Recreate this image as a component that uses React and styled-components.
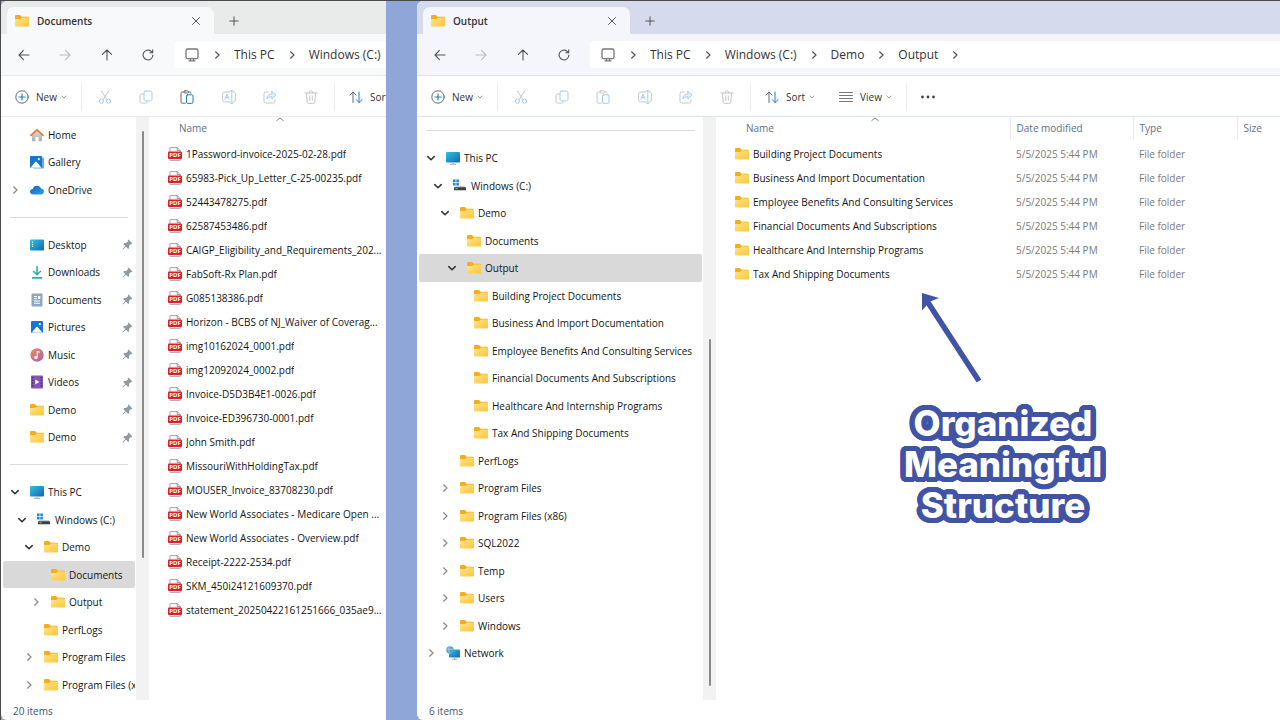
import React from 'react';
import styled, { createGlobalStyle, css } from 'styled-components';

const GlobalStyle = createGlobalStyle`
  *, *::before, *::after { box-sizing: border-box; }
  body {
    margin: 0;
    background: #8fa7d8;
    color: #141414;
    font: 10px/16px "Open Sans", "Noto Sans", sans-serif;
  }
  ul { margin: 0; padding: 0; list-style: none; }
  button {
    display: flex;
    align-items: center;
    margin: 0;
    padding: 0;
    border: 0;
    background: none;
    color: inherit;
    font: inherit;
    white-space: nowrap;
  }
  svg { display: block; flex: none; }
`;

/* ---------- layout ---------- */

const Desktop = styled.main`
  display: grid;
  grid-template-columns: minmax(0, 385fr) 31px minmax(0, 863fr);
  min-height: 100vh;
  border-top: 1px solid #4c494b;
  border-left: 1px solid #4c494b;
`;

const Gutter = styled.div`
  background: #8fa7d8;
`;

const Window = styled.section`
  display: flex;
  flex-direction: column;
  min-width: 0;
  overflow: hidden;
  background: #fff;
  border-radius: 6px 0 0 6px;
  --chrome: ${(p) => (p.$active ? '#d5daec' : '#e9eaea')};
  --bar: ${(p) => (p.$active ? '#f5f6fb' : '#f8f9fb')};
  --line: ${(p) => (p.$active ? '#dbe1ee' : '#e8e9eb')};
`;

const TabStrip = styled.header`
  display: flex;
  align-items: flex-end;
  height: 33px;
  padding-left: 6px;
  background: var(--chrome);
`;

const Tab = styled.div`
  display: flex;
  align-items: center;
  gap: 8px;
  width: 207px;
  height: 27px;
  padding: 0 13px 0 8px;
  background: var(--bar);
  border-radius: 7px 7px 0 0;
`;

const TabTitle = styled.h1`
  flex: 1;
  margin: 0;
  color: #333;
  font-size: 10px;
  font-weight: 600;
`;

const NewTab = styled.button`
  justify-content: center;
  width: 40px;
  height: 27px;
  color: #555;
`;

const AddressBar = styled.nav`
  display: flex;
  gap: 5px;
  height: 42px;
  padding: 7px 0 7px 2px;
  background: var(--bar);
  border-bottom: 1px solid var(--line);
`;

const NavButtons = styled.div`
  display: grid;
  grid-template-columns: repeat(4, 1fr);
  flex: none;
  width: 166px;
`;

const IconButton = styled.button`
  justify-content: center;
  color: ${(p) => (p.$dim ? '#bdbdbd' : '#555')};
`;

const Path = styled.div`
  display: flex;
  align-items: center;
  flex: 1;
  min-width: 0;
  overflow: hidden;
  padding-left: 10px;
  background: #fff;
  border-radius: 4px 0 0 4px;
  color: #333;
  font-size: 12px;
`;

const Crumb = styled.a`
  flex: none;
  color: inherit;
  text-decoration: none;
  white-space: nowrap;
`;

const CrumbArrow = styled.span`
  display: flex;
  justify-content: center;
  flex: none;
  width: 34px;
  color: #555;
`;

const Toolbar = styled.div`
  display: flex;
  align-items: center;
  height: 41px;
  padding: 2px 0 0 2px;
  border-bottom: 1px solid var(--line);
  color: #333;
`;

const ToolButton = styled.button`
  flex: none;
  height: 28px;
  padding: 0 12px;
`;

const ToolLabel = styled.span`
  margin: 0 4px 0 7px;
`;

const Divider = styled.span`
  flex: none;
  width: 1px;
  height: 27px;
  margin: 0 2px;
  background: #ededed;
`;

const FileActions = styled.div`
  display: grid;
  grid-template-columns: repeat(6, 1fr);
  flex: none;
  width: 248px;
  height: 28px;
`;

const Body = styled.div`
  display: flex;
  flex: 1;
  min-height: 0;
`;

const Tree = styled.ul`
  flex: none;
  width: ${(p) => (p.$wide ? '286px' : '135px')};
  padding: ${(p) => (p.$wide ? '0 1px 0 2px' : '4px 1px 0 2px')};
`;

const TreeItem = styled.li`
  display: flex;
  flex-direction: column;
  justify-content: center;
  height: 27px;
  &:nth-child(even) { height: 28px; }
`;

const TreeRule = styled.hr`
  width: calc(100% - 14px);
  margin: 0 7px;
  border: 0;
  border-top: 1px solid #dcdcdc;
`;

const TreeButton = styled.button`
  width: 100%;
  height: 100%;
  overflow: hidden;
  padding: 0 2px 0 ${(p) => 5 + p.$depth * 7}px;
  border-radius: 2px;
  ${(p) => p.$selected && css`background: #d9d9d9;`}
`;

const Twisty = styled.span`
  display: flex;
  justify-content: center;
  flex: none;
  width: 14px;
  margin-right: 8px;
  color: ${(p) => (p.$open ? '#333' : '#8a8a8a')};
`;

const TreeLabel = styled.span`
  flex: 1;
  margin-left: 4px;
  text-align: left;
`;

const ScrollTrack = styled.div`
  display: flex;
  justify-content: center;
  flex: none;
  width: 13px;
  padding: ${(p) => p.$before}px 0 ${(p) => p.$after}px;
  background: #f2f2f2;
`;

const ScrollThumb = styled.span`
  width: 2px;
  border-radius: 1px;
  background: #8a8a8a;
`;

const Files = styled.div`
  flex: 1;
  min-width: 0;
  overflow: hidden;
`;

const FileTable = styled.table`
  width: 100%;
  table-layout: fixed;
  border-collapse: collapse;
  white-space: nowrap;
`;

const HeadCell = styled.th`
  position: relative;
  width: ${(p) => p.$width || 'auto'};
  height: 23px;
  padding: 0 0 2px ${(p) => (p.$first ? '30px' : '6px')};
  border-left: ${(p) => (p.$first ? '0' : '1px solid #e6eaf2')};
  color: #5d6f88;
  font-weight: 400;
  text-align: left;
`;

const SortMark = styled.span`
  position: absolute;
  top: 0;
  left: calc(50% + 8px);
  color: #777;
`;

const HeadGap = styled.tr`
  height: 2px;
`;

const Cell = styled.td`
  height: 24px;
  padding: 0 0 0 6px;
  color: #7a7a7a;
`;

const NameCell = styled(Cell)`
  padding: 0 1px 0 19px;
  color: #141414;
`;

const FileRow = styled.div`
  display: flex;
  align-items: center;
  gap: 4px;
`;

const FileName = styled.span`
  min-width: 0;
  overflow: hidden;
  text-overflow: ellipsis;
`;

const Status = styled.footer`
  height: 20px;
  padding: 3px 0 0 12px;
  color: #3b5573;
`;

const Callout = styled.aside`
  display: flex;
  flex-direction: column;
  box-sizing: content-box;
  width: 204px;
  margin: 6px auto 0;
  padding-left: 10px;
`;

const CalloutArrow = styled.svg`
  margin-left: 17px;
`;

const outline = Array.from({ length: 32 }, (_, i) => {
  const angle = (i * Math.PI) / 16;
  return `${(5.4 * Math.cos(angle)).toFixed(2)}px ${(5.4 * Math.sin(angle)).toFixed(2)}px 0 #4053a4`;
}).join(', ');

const CalloutText = styled.p`
  margin: 19px 0 0;
  color: #fff;
  font: 800 35px/41px Inter, "Open Sans", sans-serif;
  text-align: center;
  text-shadow: ${outline}, 2px 2px 0 #4053a4, -2px 2px 0 #4053a4, 2px -2px 0 #4053a4, -2px -2px 0 #4053a4;
`;

/* ---------- line icons ---------- */

const Line = ({ size = 16, width = 1, children, ...rest }) => (
  <svg width={size} height={size} viewBox={`0 0 ${size} ${size}`} fill="none" stroke="currentColor"
    strokeWidth={width} strokeLinecap="round" strokeLinejoin="round" aria-hidden="true" {...rest}>
    {children}
  </svg>
);

const Close = () => <Line size={10}><path d="M1.5 1.5l7 7M8.5 1.5l-7 7" /></Line>;
const Plus = () => <Line size={10}><path d="M5 .8v8.4M.8 5h8.4" /></Line>;
const Back = () => <Line size={12} width={1.1}><path d="M11 6H1M5.4 1.4L1 6l4.4 4.6" /></Line>;
const Forward = () => <Line size={12} width={1.1}><path d="M1 6h10M6.6 1.4L11 6l-4.4 4.6" /></Line>;
const Up = () => <Line size={12} width={1.1}><path d="M6 11V1M1.4 5.4L6 1l4.6 4.4" /></Line>;
const Refresh = () => <Line size={12} width={1.1}><path d="M10.9 6a4.9 4.9 0 1 1-1.7-3.7l1.3 1.3M10.7.8v2.9H7.8" /></Line>;
const Monitor = () => (
  <Line size={16} width={1.3} stroke="#777">
    <rect x="2" y="2" width="12" height="9.6" rx="1.6" /><path d="M5 13.8h6M6.4 12v1.6M9.6 12v1.6" />
  </Line>
);
const ChevronRight = () => <Line size={8} width={1.2}><path d="M2.6.8L6 4 2.6 7.2" /></Line>;
const ChevronDown = () => <Line size={8} width={1.5}><path d="M.8 2.6L4 5.8l3.2-3.2" /></Line>;
const SmallDown = () => <Line size={6} width={0.9} stroke="#999"><path d="M1 2l2 2 2-2" /></Line>;
const SortUp = () => <Line size={8}><path d="M.8 3.6L4 .9l3.2 2.7" /></Line>;

const NewIcon = () => (
  <Line size={14}><circle cx="7" cy="7" r="6.2" stroke="#666" /><path d="M7 4v6M4 7h6" stroke="#1a80d0" strokeWidth="1.2" /></Line>
);
const Cut = () => (
  <Line size={14}>
    <path d="M3.2.8l5.9 9M10.8.8l-5.9 9" stroke="#c4c4c4" />
    <circle cx="3.4" cy="11.2" r="2.1" stroke="#9fcdf0" /><circle cx="10.6" cy="11.2" r="2.1" stroke="#9fcdf0" />
  </Line>
);
const Copy = () => (
  <Line size={14}>
    <path d="M4 4H2.6C1.6 4 1 4.6 1 5.5v5.6c0 1.2.8 2 2 2h3.6c.9 0 1.5-.5 1.6-1.3" stroke="#c4c4c4" />
    <rect x="5" y="1" width="8" height="10" rx="1.7" stroke="#9fcdf0" />
  </Line>
);
const Paste = ({ on }) => (
  <Line size={14}>
    <path d="M4 2H2.2C1.5 2 1 2.5 1 3.2V12c0 .7.5 1.200 1.200 1.200h3M8.500 2h1.300c.7 0 1.200.5 1.200 1.200" stroke={on ? '#666' : '#c8c8c8'} />
    <rect x="4" y=".8" width="4.5" height="2.2" rx="1" stroke={on ? '#666' : '#c8c8c8'} />
    <rect x="6.5" y="4.8" width="6.5" height="8.600" rx="1.2" stroke={on ? '#1a80d0' : '#9fcdf0'} />
  </Line>
);
const Rename = () => (
  <Line size={14}>
    <path d="M8.200 2H2.300C1.300 2 .7 2.600.7 3.500v6.800c0 1 .6 1.600 1.600 1.600h5.900M11.400 2c1.200 0 2 .6 2 1.600v6.700c0 1-.8 1.600-2 1.600" stroke="#c4c4c4" />
    <path d="M9.800.7v12.600M8.600.7H11M8.600 13.300H11M3 9.200l2-5 2 5M3.700 7.700h2.700" stroke="#9fcdf0" />
  </Line>
);
const Share = () => (
  <Line size={14}>
    <path d="M5 2H3C1.800 2 1 2.800 1 4v7c0 1.200.8 2 2 2h7c1.200 0 2-.8 2-2v-.8" stroke="#c4c4c4" />
    <path d="M8.800 1.400L13 5.200 8.800 9V6.800C6.500 6.700 5 7.500 3.800 9c.2-3.200 2-5 5-5.200z" stroke="#9fcdf0" fill="#e3f1fc" />
  </Line>
);
const Trash = () => (
  <Line size={14} stroke="#c4c4c4">
    <path d="M1 3h12M5 3c0-1.400.8-2.200 2-2.200S9 1.600 9 3M2.300 3l.9 9c.1.8.6 1.300 1.400 1.300h4.800c.8 0 1.300-.5 1.400-1.300l.9-9M5.700 5.800v4.700M8.300 5.800v4.700" />
  </Line>
);
const SortIcon = () => (
  <Line size={14}>
    <path d="M4 12.500V2M1 5l3-3 3 3" stroke="#666" /><path d="M10 2v10.500M7.300 9.700l2.700 2.800 3-2.800" stroke="#1a80d0" />
  </Line>
);
const ViewIcon = () => <Line size={14} stroke="#777"><path d="M.5 2.500h13M.5 5.500h13M.5 8.500h13M.5 11.500h13" /></Line>;
const More = () => (
  <svg width="14" height="4" viewBox="0 0 14 4" fill="#444" aria-hidden="true"><circle cx="1.500" cy="2" r="1.400" /><circle cx="7" cy="2" r="1.400" /><circle cx="12.500" cy="2" r="1.400" /></svg>
);

/* ---------- colour icons ---------- */

const Glyph = ({ children }) => <svg width="14" height="14" viewBox="0 0 14 14" aria-hidden="true">{children}</svg>;

const GradientDefs = styled.svg`
  position: absolute;
`;

const Gradients = () => (
  <GradientDefs width="0" height="0" aria-hidden="true">
    <defs>
      <linearGradient id="folder" x1="0" y1="0" x2="1" y2="1"><stop offset="0" stopColor="#ffe48f" /><stop offset="1" stopColor="#fcc637" /></linearGradient>
      <linearGradient id="screen" x1="0" y1="0" x2="1" y2="1"><stop offset="0" stopColor="#2cc5dc" /><stop offset="1" stopColor="#1763b8" /></linearGradient>
      <linearGradient id="cloud" x1="0" y1="0" x2="1" y2="1"><stop offset="0" stopColor="#0f5fb4" /><stop offset="1" stopColor="#2ba6ea" /></linearGradient>
      <linearGradient id="music" x1="0" y1="0" x2="1" y2="1"><stop offset="0" stopColor="#ee8a5d" /><stop offset="1" stopColor="#ae61a8" /></linearGradient>
      <linearGradient id="wall" x1="0" y1="0" x2="0" y2="1"><stop offset="0" stopColor="#e3e3e3" /><stop offset="1" stopColor="#aaa" /></linearGradient>
    </defs>
  </GradientDefs>
);

const Picture = () => (
  <g>
    <rect y="1" width="12" height="12" rx="1" fill="#1976ce" />
    <path d="M.5 12.700l4.600-5.400c.5-.6 1.200-.6 1.700 0l4.700 5.400z" fill="#fff" />
    <circle cx="8.800" cy="4.200" r="1.100" fill="#fff" />
  </g>
);

const glyphs = {
  folder: (
    <Glyph>
      <path d="M0 2.200C0 1.500.5 1 1.200 1h3.300c.5 0 .8.2 1.100.5l1 1.200h6.200c.7 0 1.200.5 1.200 1.200V6H0z" fill="#f5ae1b" />
      <path d="M0 5h4.700c.4 0 .8-.1 1.100-.4l.8-.7c.3-.3.600-.4 1-.4h5.400c.6 0 1 .4 1 1v7c0 .7-.5 1.100-1.200 1.100H1.200C.5 12.600 0 12.200 0 11.500z" fill="url(#folder)" />
    </Glyph>
  ),
  home: (
    <Glyph>
      <path d="M2 6.300L7 2l5 4.300v6.200c0 .5-.3.8-.8.800H8.700V9.500c0-.4-.2-.6-.6-.6H6c-.4 0-.6.2-.6.600v3.800H2.800c-.5 0-.8-.3-.8-.8z" fill="url(#wall)" />
      <path d="M1 7.300L7 1.800l6 5.500" fill="none" stroke="#e8792c" strokeWidth="1.800" strokeLinecap="round" strokeLinejoin="round" />
    </Glyph>
  ),
  gallery: <Glyph><rect x="3" y="2.500" width="11" height="11" rx="1" fill="#6fa9e0" /><Picture /></Glyph>,
  cloud: <Glyph><path d="M3.400 11.500C1.500 11.500 0 10.300 0 8.700 0 7.200 1.200 6.100 2.800 6 3.400 3.900 5 2.800 7 2.800c1.900 0 3.300 1 3.900 2.700 1.800.1 3.100 1.300 3.100 3s-1.400 3-3.200 3z" fill="url(#cloud)" /></Glyph>,
  desktop: <Glyph><rect y="1.500" width="14" height="11" rx="1" fill="url(#screen)" /><path d="M2 4h1.200M2 6.200h1.200M2 8.400h1.200" stroke="#fff" strokeWidth="1.100" /></Glyph>,
  download: <Glyph><path d="M7 1v8.500M3.200 6L7 9.700 10.800 6M2 12.900h10" fill="none" stroke="#2db39a" strokeWidth="1.600" /></Glyph>,
  document: (
    <Glyph>
      <rect x="1.500" y=".5" width="11" height="13" rx="1" fill="#8fa6c0" />
      <path d="M4 3.500h3M4 5.700h3M4 8h6M4 10.300h6" stroke="#fff" strokeWidth="1.100" /><rect x="8" y="3" width="2.300" height="3" fill="#fff" />
    </Glyph>
  ),
  picture: <Glyph><g transform="translate(1 0)"><Picture /></g></Glyph>,
  music: (
    <Glyph>
      <circle cx="7" cy="7" r="6.700" fill="url(#music)" />
      <path d="M7.300 9.300V3.200l2.500 1" fill="none" stroke="#fff" strokeWidth="1.100" /><circle cx="5.900" cy="9.400" r="1.600" fill="#fff" />
    </Glyph>
  ),
  video: (
    <Glyph>
      <rect x="1" y=".5" width="12" height="13" rx="1" fill="#8456b3" /><path d="M5.300 4.600v4.800L9.300 7z" fill="#fff" />
      <path d="M2.700 2v10.500M11.300 2v10.500" stroke="#47266f" strokeWidth="1.200" strokeDasharray="1.300 1.400" />
    </Glyph>
  ),
  pc: <Glyph><rect y="1" width="14" height="10.500" rx="1" fill="url(#screen)" /><path d="M7 11.500v1.500M4 13.300h6" stroke="#9aa9b5" strokeWidth="1" /></Glyph>,
  drive: (
    <Glyph>
      <path d="M0 .5h2.600v2.600H0zM3.300.5h2.600v2.600H3.300zM0 3.800h2.600v2.600H0zM3.300 3.800h2.600v2.600H3.300z" fill="#1f86d6" />
      <path d="M2.500 7h9l1.300 1.800H1.200z" fill="#c8c8c8" /><rect x="1" y="8.200" width="12" height="3" rx=".5" fill="#3c3f42" /><path d="M2.500 9.700h2" stroke="#5fe08a" />
    </Glyph>
  ),
  network: (
    <Glyph>
      <rect x="3" y="3.500" width="11" height="8" rx=".8" fill="url(#screen)" /><path d="M8.500 11.500V13M6 13.300h5" stroke="#9aa9b5" />
      <circle cx="4" cy="4" r="3.700" fill="#4fa3d0" /><path d="M.6 3.200h6.800M4 .3C2.200 2.400 2.200 5.600 4 7.700" fill="none" stroke="#a9d9ee" strokeWidth=".8" />
    </Glyph>
  ),
  pdf: (
    <Glyph>
      <path d="M2 .5h7.500l2.700 2.700v10.200H2z" fill="#f6f6f6" stroke="#a2a2a2" strokeWidth=".9" /><path d="M9.200.5v3h3" fill="#ddd" stroke="#8f8f8f" strokeWidth=".8" />
      <rect y="4.500" width="14" height="7.500" rx=".9" fill="#e01f2d" />
      <text x="7" y="10.400" textAnchor="middle" fill="#fff" fontFamily="Open Sans, sans-serif" fontWeight="700" fontSize="6">PDF</text>
    </Glyph>
  ),
};

const Pin = () => (
  <svg width="11" height="11" viewBox="0 0 11 11" fill="#8f9ba3" aria-hidden="true">
    <path d="M6.600.6l3.800 3.800-.8.800-.7-.1-1.900 1.900.1 2-.9.900-2.200-2.200L1 10.500l-.5-.5 2.800-3L1.200 4.900l.9-.9 2 .1L6 2.200l-.2-.8z" />
  </svg>
);

/* ---------- parts ---------- */

function TreeRow({ item }) {
  if (item === null) return <TreeItem><TreeRule /></TreeItem>;
  const { icon = 'folder', label, depth = 0, open, pin, selected } = item;
  return (
    <TreeItem>
      <TreeButton $depth={depth} $selected={selected}>
        <Twisty $open={open}>{open === true && <ChevronDown />}{open === false && <ChevronRight />}</Twisty>
        {glyphs[icon]}
        <TreeLabel>{label}</TreeLabel>
        {pin && <Pin />}
      </TreeButton>
    </TreeItem>
  );
}

function Explorer({ title, active, path, trailing, tree, thumb, columns, files, icon, status, children }) {
  return (
    <Window $active={active} aria-label={title}>
      <TabStrip>
        <Tab>{glyphs.folder}<TabTitle>{title}</TabTitle><IconButton aria-label="Close tab"><Close /></IconButton></Tab>
        <NewTab aria-label="New tab"><Plus /></NewTab>
      </TabStrip>
      <AddressBar aria-label="Location">
        <NavButtons>
          <IconButton aria-label="Back"><Back /></IconButton>
          <IconButton $dim aria-label="Forward"><Forward /></IconButton>
          <IconButton aria-label="Up"><Up /></IconButton>
          <IconButton aria-label="Refresh"><Refresh /></IconButton>
        </NavButtons>
        <Path>
          <Monitor />
          {path.map((name) => (
            <React.Fragment key={name}><CrumbArrow><ChevronRight /></CrumbArrow><Crumb href="#">{name}</Crumb></React.Fragment>
          ))}
          {trailing && <CrumbArrow><ChevronRight /></CrumbArrow>}
        </Path>
      </AddressBar>
      <Toolbar>
        <ToolButton><NewIcon /><ToolLabel>New</ToolLabel><SmallDown /></ToolButton>
        <Divider />
        <FileActions>
          <IconButton aria-label="Cut"><Cut /></IconButton>
          <IconButton aria-label="Copy"><Copy /></IconButton>
          <IconButton aria-label="Paste"><Paste on={!active} /></IconButton>
          <IconButton aria-label="Rename"><Rename /></IconButton>
          <IconButton aria-label="Share"><Share /></IconButton>
          <IconButton aria-label="Delete"><Trash /></IconButton>
        </FileActions>
        <Divider />
        <ToolButton><SortIcon /><ToolLabel>Sort</ToolLabel><SmallDown /></ToolButton>
        {active && (
          <>
            <ToolButton><ViewIcon /><ToolLabel>View</ToolLabel><SmallDown /></ToolButton>
            <Divider />
            <ToolButton aria-label="More"><More /></ToolButton>
          </>
        )}
      </Toolbar>
      <Body>
        <Tree $wide={active}>{tree.map((item, i) => <TreeRow key={i} item={item} />)}</Tree>
        <ScrollTrack $before={thumb[0]} $after={thumb[1]}><ScrollThumb /></ScrollTrack>
        <Files>
          <FileTable>
            <thead>
              <tr>
                <HeadCell $first>Name<SortMark><SortUp /></SortMark></HeadCell>
                {columns.map(([name, width]) => <HeadCell key={name} $width={width}>{name}</HeadCell>)}
              </tr>
            </thead>
            <tbody>
              <HeadGap />
              {files.map((row) => (
                <tr key={row[0]}>
                  <NameCell><FileRow>{glyphs[icon]}<FileName>{row[0]}</FileName></FileRow></NameCell>
                  {row.slice(1).map((value, i) => <Cell key={i}>{value}</Cell>)}
                </tr>
              ))}
            </tbody>
          </FileTable>
          {children}
        </Files>
      </Body>
      <Status>{status}</Status>
    </Window>
  );
}

/* ---------- data ---------- */

const documentsTree = [
  { icon: 'home', label: 'Home' },
  { icon: 'gallery', label: 'Gallery' },
  { icon: 'cloud', label: 'OneDrive', open: false },
  null,
  { icon: 'desktop', label: 'Desktop', pin: true },
  { icon: 'download', label: 'Downloads', pin: true },
  { icon: 'document', label: 'Documents', pin: true },
  { icon: 'picture', label: 'Pictures', pin: true },
  { icon: 'music', label: 'Music', pin: true },
  { icon: 'video', label: 'Videos', pin: true },
  { label: 'Demo', pin: true },
  { label: 'Demo', pin: true },
  null,
  { icon: 'pc', label: 'This PC', open: true },
  { icon: 'drive', label: 'Windows (C:)', depth: 1, open: true },
  { label: 'Demo', depth: 2, open: true },
  { label: 'Documents', depth: 3, selected: true },
  { label: 'Output', depth: 3, open: false },
  { label: 'PerfLogs', depth: 2 },
  { label: 'Program Files', depth: 2, open: false },
  { label: 'Program Files (x86)', depth: 2, open: false },
];

const folders = [
  'Building Project Documents',
  'Business And Import Documentation',
  'Employee Benefits And Consulting Services',
  'Financial Documents And Subscriptions',
  'Healthcare And Internship Programs',
  'Tax And Shipping Documents',
];

const outputTree = [
  null,
  { icon: 'pc', label: 'This PC', open: true },
  { icon: 'drive', label: 'Windows (C:)', depth: 1, open: true },
  { label: 'Demo', depth: 2, open: true },
  { label: 'Documents', depth: 3 },
  { label: 'Output', depth: 3, open: true, selected: true },
  ...folders.map((label) => ({ label, depth: 4 })),
  { label: 'PerfLogs', depth: 2 },
  ...['Program Files', 'Program Files (x86)', 'SQL2022', 'Temp', 'Users', 'Windows'].map((label) => ({ label, depth: 2, open: false })),
  { icon: 'network', label: 'Network', open: false },
];

const pdfs = [
  '1Password-invoice-2025-02-28.pdf',
  '65983-Pick_Up_Letter_C-25-00235.pdf',
  '52443478275.pdf',
  '62587453486.pdf',
  'CAIGP_Eligibility_and_Requirements_202...',
  'FabSoft-Rx Plan.pdf',
  'G085138386.pdf',
  'Horizon - BCBS of NJ_Waiver of Coverag...',
  'img10162024_0001.pdf',
  'img12092024_0002.pdf',
  'Invoice-D5D3B4E1-0026.pdf',
  'Invoice-ED396730-0001.pdf',
  'John Smith.pdf',
  'MissouriWithHoldingTax.pdf',
  'MOUSER_Invoice_83708230.pdf',
  'New World Associates - Medicare Open ...',
  'New World Associates - Overview.pdf',
  'Receipt-2222-2534.pdf',
  'SKM_450i24121609370.pdf',
  'statement_20250422161251666_035ae977...',
];

export default function App() {
  return (
    <>
      <GlobalStyle />
      <Gradients />
      <Desktop>
        <Explorer
          title="Documents"
          path={['This PC', 'Windows (C:)']}
          tree={documentsTree}
          thumb={[14, 142]}
          columns={[]}
          files={pdfs.map((name) => [name])}
          icon="pdf"
          status="20 items"
        />
        <Gutter />
        <Explorer
          active
          title="Output"
          path={['This PC', 'Windows (C:)', 'Demo', 'Output']}
          trailing
          tree={outputTree}
          thumb={[222, 14]}
          columns={[['Date modified', '123px'], ['Type', '104px'], ['Size', '43px']]}
          files={folders.map((name) => [name, '5/5/2025 5:44 PM', 'File folder', ''])}
          icon="folder"
          status="6 items"
        >
          <Callout>
            <CalloutArrow width="64" height="92" viewBox="0 0 64 92" aria-hidden="true">
              <path d="M61 89L9 9" stroke="#4053a4" strokeWidth="5.500" fill="none" />
              <path d="M4 1l17 5-9 3.500-8 9z" fill="#4053a4" />
            </CalloutArrow>
            <CalloutText>Organized<br />Meaningful<br />Structure</CalloutText>
          </Callout>
        </Explorer>
      </Desktop>
    </>
  );
}
